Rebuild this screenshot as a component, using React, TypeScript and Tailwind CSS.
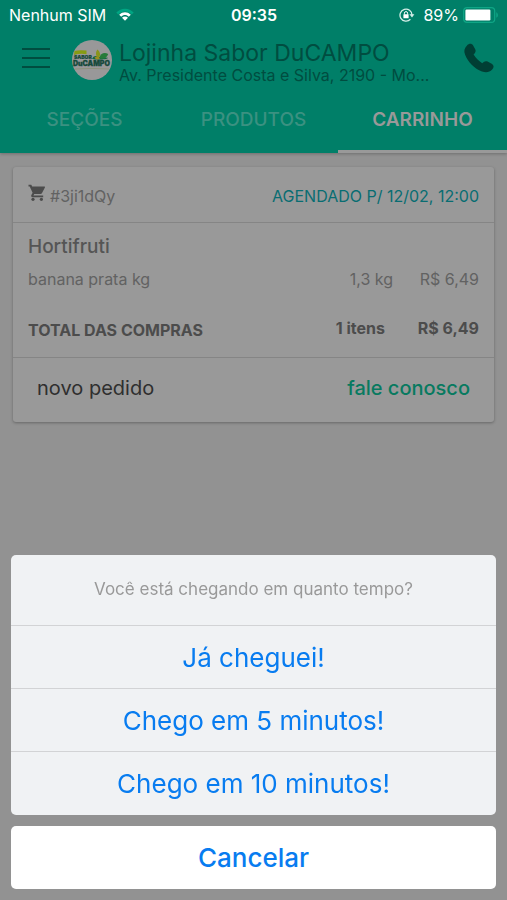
import React from "react";

function WifiIcon() {
  return (
    <svg width="18" height="14" viewBox="0 0 18 14" aria-hidden="true">
      <path d="M0.3 4.6C5 -0.5 13 -0.5 17.7 4.6L15.8 6.4C12 2.4 6 2.4 2.2 6.4Z" fill="#00a583" />
      <path d="M3.2 6.7C6.5 3.4 11.5 3.4 14.8 6.7L12.8 8.7C10.6 6.5 7.4 6.5 5.2 8.7Z" fill="#fff" />
      <path d="M6 9.7C7.8 8.1 10.2 8.1 12 9.7L9 12.8Z" fill="#fff" />
    </svg>
  );
}

function RotationLockIcon() {
  return (
    <svg width="16" height="14" viewBox="0 0 16 14" fill="none" aria-hidden="true">
      <path d="M11.4 11.2A6 6 0 1 1 13 7" stroke="#d5eee8" strokeWidth="1.3" />
      <path d="M10.4 6.2H15.4L13 9.4Z" fill="#d5eee8" />
      <rect x="4.4" y="6.2" width="5.2" height="4" rx="0.5" fill="#fff" />
      <path d="M5.4 6.5V5.2A1.6 1.6 0 0 1 8.6 5.2V6.5" stroke="#fff" strokeWidth="1" />
    </svg>
  );
}

function BatteryIcon() {
  return (
    <svg width="36" height="16" viewBox="0 0 36 16" fill="none" aria-hidden="true">
      <rect x="0.7" y="0.7" width="31" height="14.6" rx="3.4" stroke="#0fa686" strokeWidth="1.2" />
      <rect x="2.4" y="2.5" width="25" height="11" rx="1.2" fill="#fff" />
      <path d="M33.3 5.2C35.4 6.2 35.4 9.8 33.3 10.8Z" fill="#0fa686" />
    </svg>
  );
}

function StoreLogo() {
  return (
    <svg width="40" height="40" viewBox="0 0 40 40" className="shrink-0" role="img" aria-label="Sabor DuCampo">
      <circle cx="20" cy="20" r="20" fill="#999899" />
      <path d="M2.5 11Q8 9.6 14.5 10.6V14.2Q8 13.2 2 14.9Z" fill="#869b13" />
      <path d="M20 18.8C22 15.5 24 15.6 26 17L36 17.8C35.5 20 22 20 20 18.8Z" fill="#146844" />
      <path d="M25.4 9.5C28.5 12 28.8 15.5 26.6 18.5C23.5 16 23.2 12.5 25.4 9.5Z" fill="#8a951c" />
      <path d="M27.4 18C28.2 13.7 32.4 11.8 36.2 14.1C34.8 18.4 31 20 27.4 18Z" fill="#267b3a" />
      <path d="M22.5 17.8C24 16 26 16 28 18.7C25.8 19.8 24 19.6 22.5 17.8Z" fill="#9c8c21" />
      <text x="2" y="19" fill="#16493b" stroke="#16493b" strokeWidth="0.2" fontSize="5" fontWeight="900" fontFamily="Inter, sans-serif">SABOR</text>
      <text x="1" y="26" fill="#16493b" stroke="#16493b" strokeWidth="0.3" fontSize="7" fontWeight="900" fontFamily="Inter, sans-serif">DuCAMPO</text>
      <path d="M3 29Q20 27.8 37 29" stroke="#7e8c5c" strokeWidth="0.5" fill="none" />
    </svg>
  );
}

function PhoneIcon() {
  return (
    <svg width="32" height="32" viewBox="0 0 32 32" fill="none" aria-hidden="true">
      <path
        d="M4.2 3.2C6 1.2 8.7 1.2 10 3.2L12.2 7.3C13.2 9.1 12.4 10.9 10.6 12.6C12.7 16.2 15.6 19 19.2 21.2C21 19.3 22.8 18.6 24.6 19.6L29.1 22C31 23.3 31.1 25.6 29.2 27.6C26.5 30.4 23 31 19 29.5C11.2 26.5 5 20.3 2.1 12.8C0.6 8.9 1.3 6.1 4.2 3.2Z"
        fill="#003e34"
      />
    </svg>
  );
}

function CartIcon() {
  return (
    <svg width="18" height="18" viewBox="0 0 18 18" aria-hidden="true">
      <path
        d="M0.5 0.8H3.3L4.2 2.5H16.2C16.9 2.5 17.2 3 16.9 3.6L13.9 9.2C13.6 9.7 13.2 10 12.5 10H6.3L5.4 11.6H15.2V13.2H4.6C3.4 13.2 2.8 12 3.4 11L4.6 8.8L1.7 2.4H0.5Z"
        fill="#4c4c4c"
      />
      <circle cx="5" cy="15.3" r="1.6" fill="#4c4c4c" />
      <circle cx="13.4" cy="15.3" r="1.6" fill="#4c4c4c" />
    </svg>
  );
}

const tabs = ["SEÇÕES", "PRODUTOS", "CARRINHO"];
const arrivals = ["Já cheguei!", "Chego em 5 minutos!", "Chego em 10 minutos!"];

export default function App() {
  return (
    <div className="min-h-screen bg-[#929292] font-['Inter','Liberation_Sans',sans-serif]">
      <header className="bg-[#007f68] shadow-[0_1px_3px_rgba(0,0,0,0.25)]">
        <div className="grid h-[30px] grid-cols-3 items-center pr-2 pl-[9px] text-base text-white">
          <div className="flex items-center gap-2.5 whitespace-nowrap">
            Nenhum SIM <WifiIcon />
          </div>
          <div className="text-center font-semibold">09:35</div>
          <div className="flex items-center justify-end">
            <RotationLockIcon />
            <span className="mr-1 ml-2">89%</span>
            <BatteryIcon />
          </div>
        </div>
        <div className="flex h-14 items-center pr-3 pl-[22px]">
          <button type="button" aria-label="Menu" className="flex w-7 shrink-0 flex-col gap-[7px]">
            <span className="h-0.5 bg-[#004d40]" />
            <span className="h-0.5 bg-[#004d40]" />
            <span className="h-0.5 bg-[#004d40]" />
          </button>
          <div className="mt-1 ml-[22px] flex min-w-0 flex-1 items-center gap-[7px]">
            <StoreLogo />
            <div className="min-w-0 pt-1.5 text-[#004d40]">
              <h1 className="-my-0.5 truncate text-[23px] leading-7">Lojinha Sabor DuCAMPO</h1>
              <p className="truncate text-base leading-5">Av. Presidente Costa e Silva, 2190 - Mo...</p>
            </div>
          </div>
          <button type="button" aria-label="Ligar" className="shrink-0">
            <PhoneIcon />
          </button>
        </div>
        <nav className="grid h-[67px] grid-cols-3">
          {tabs.map((tab) => (
            <button
              key={tab}
              type="button"
              className={
                tab === "CARRINHO"
                  ? "border-b-[3px] border-[#999999] pt-1 text-[19px] font-semibold text-[#999999]"
                  : "border-b-[3px] border-transparent pt-1 text-[19px] font-medium text-[#3b9181]"
              }
            >
              {tab}
            </button>
          ))}
        </nav>
      </header>

      <main className="px-[13px] pt-3.5">
        <section className="rounded-[3px] bg-[#999999] text-base text-[#626262] shadow-[0_1px_3px_rgba(0,0,0,0.3)]">
          <div className="flex h-14 items-center justify-between border-b border-[#858585] px-[15px] pt-0.5">
            <div className="flex items-start gap-1">
              <CartIcon />
              #3ji1dQy
            </div>
            <div className="text-[#086d72]">AGENDADO P/ 12/02, 12:00</div>
          </div>
          <div className="border-b border-[#858585] px-[15px] pt-3">
            <h2 className="text-[19px] leading-6 font-medium text-[#555555]">Hortifruti</h2>
            <table className="w-full">
              <tbody>
                <tr className="h-10">
                  <td>banana prata kg</td>
                  <td className="text-right">1,3 kg</td>
                  <td className="w-[86px] text-right">R$ 6,49</td>
                </tr>
                <tr className="h-[58px] font-bold text-[#4c4c4c]">
                  <td className="pt-1">TOTAL DAS COMPRAS</td>
                  <td className="pr-2 text-right">1 itens</td>
                  <td className="text-right">R$ 6,49</td>
                </tr>
              </tbody>
            </table>
          </div>
          <div className="flex h-16 items-center justify-between px-6 pb-1 text-xl">
            <button type="button" className="text-[#2f2f2f]">novo pedido</button>
            <button type="button" className="font-medium text-[#087a60]">fale conosco</button>
          </div>
        </section>
      </main>

      <div
        role="dialog"
        aria-labelledby="arrival-title"
        className="fixed inset-x-0 bottom-0 flex flex-col gap-[11px] px-[11px] pb-[11px] text-[26px] text-[#087cf0]"
      >
        <div className="divide-y divide-[#d2d3d5] overflow-hidden rounded-[5px] bg-[#f0f2f4]">
          <h2 id="arrival-title" className="flex h-[71px] items-center justify-center text-[17px] text-[#999999]">
            Você está chegando em quanto tempo?
          </h2>
          {arrivals.map((label) => (
            <button key={label} type="button" className="block h-[63px] w-full">
              {label}
            </button>
          ))}
        </div>
        <button type="button" className="h-[63px] rounded-[5px] bg-white font-medium">
          Cancelar
        </button>
      </div>
    </div>
  );
}
